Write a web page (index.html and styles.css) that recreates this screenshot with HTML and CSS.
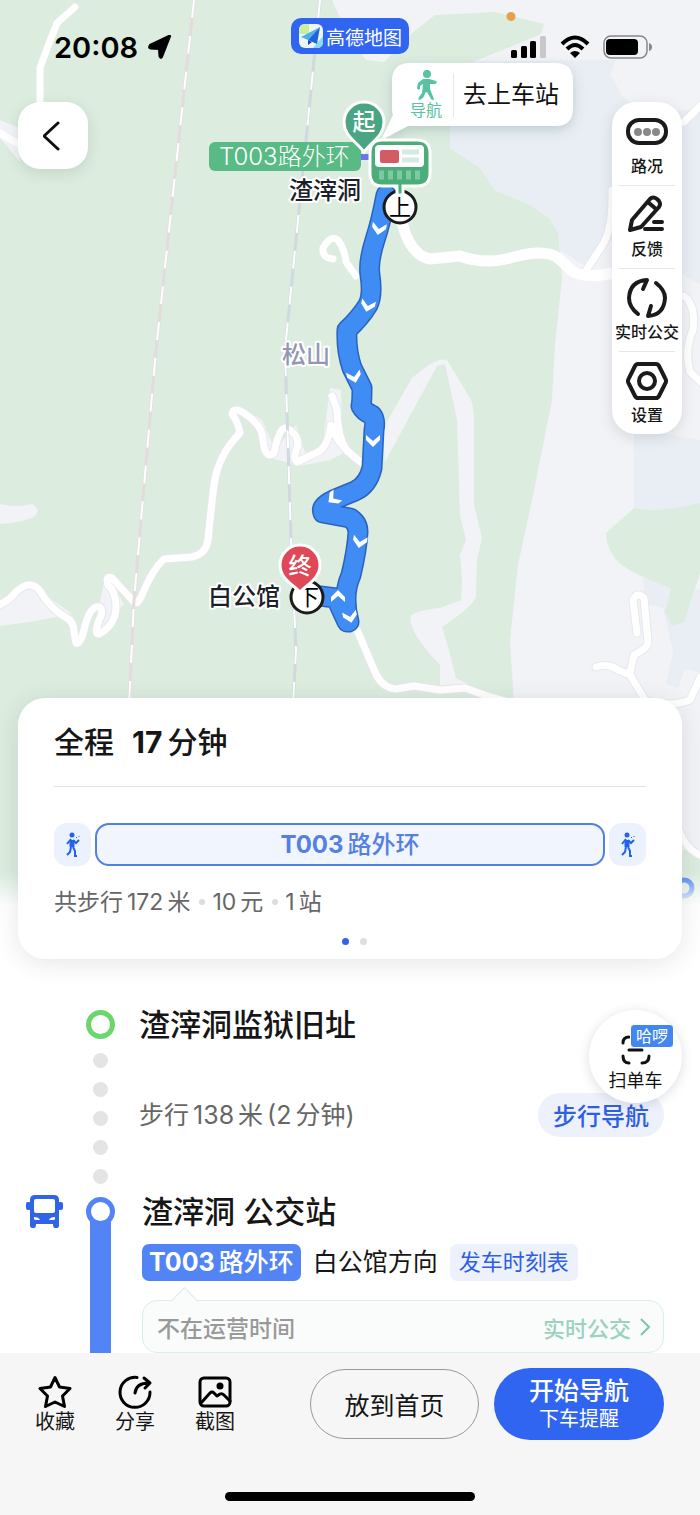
FILE: index.html
```
<!DOCTYPE html>
<html lang="zh-CN">
<head>
<meta charset="UTF-8" />
<meta name="viewport" content="width=device-width, initial-scale=1" />
<title>公交路线详情</title>
<link rel="stylesheet" href="styles.css">
</head>
<body>

<!-- mapa -->
<svg class="map" viewBox="0 0 700 905" preserveAspectRatio="xMidYMin slice">
  <defs>
    <linearGradient id="fade" x1="0" y1="0" x2="0" y2="1">
      <stop offset="0" stop-color="#fff" stop-opacity="0" />
      <stop offset="1" stop-color="#fff" />
    </linearGradient>
    <filter id="shadow" x="-20%" y="-30%" width="140%" height="180%">
      <feDropShadow dx="0" dy="4" stdDeviation="6" flood-color="#4a6070" flood-opacity=".25" />
    </filter>
    <path id="arrow" d="M-7-5 0 1 7-5V0L0 7-7 0Z" />
  </defs>

  <rect width="700" height="905" fill="#dcecdf" />
  <path class="land" d="M332 0 350 40 366 60 384 62 410 35 435 15 495 12 544 24 541 34 510 47 475 61 455 90 450 127 450 148 480 168 495 190 530 205 550 219 558 232 562 278 555 345 552 400 530 510 518 565 510 640 514 705 505 850 700 850V0Z" />
  <path class="water" d="M450 127 455 92 475 61 616 60 610 75 624 98 650 115 700 108V285L684 275 612 240 602 246 585 266 560 250 558 232 550 219 530 205 495 190 480 168 450 148ZM634 428 700 440V505L660 510 634 508ZM643 572 700 590V672L685 669 678 688 666 684 673 652 668 630 663 608 644 604Z" />
  <path fill="#dcecdf" d="M634 508Q660 513 700 503V573L684 622 672 626 665 612 671 588Q620 570 613 555 606 545 606 533Z" />
  <path class="land" d="M382 430 412 378Q437 356 447 360L470 398Q474 405 474 420V505L482 538 477 560 476 596Q474 606 442 627L449 650 456 678 480 690 440 688 440 665Q411 635 410 618 411 611 440 608L461 600 462 580 460 555 466 540 460 515 457 420 445 364 437 366 385 462ZM0 504Q18 508 32 504 42 510 34 517 20 523 0 524ZM0 120 20 128V162L0 138ZM0 603 28 582 72 614 30 622 0 626ZM106 574 124 604 96 635 99 606ZM233 402 262 420 275 450 296 425 305 452 322 450 330 388 341 390 342 432 350 450 330 460 300 466 270 458 258 420Z" />

  <g class="road casing">
    <path d="M-4 606Q8 602 15 593 30 578 40 591 50 608 65 617 74 621 74 632L76 643Q80 645 84 630 90 604 100 607 104 612 99 620 94 634 99 634 116 625 116 606 116 592 108 585 105 575 112 578L134 602Q138 605 142 595 152 570 164 559L192 557Q206 554 208 540 211 510 214 485 218 455 240 433 238 422 232 414 234 405 248 416 263 427 263 440 265 460 274 453 279 428 285 428 298 432 298 446 292 458 297 462L320 451Q328 445 331 425 337 445 362 463M332 396 337 410Q338 440 348 452" />
    <path d="M357 630 375 672Q382 688 396 689L414 686 440 690 465 688 490 697 520 705" />
    <path d="M637 633 633 600Q637 591 644 598L648 642Q648 648 634 655L630 672M596 667Q608 663 618 670L630 675 645 700Q670 708 690 700L700 678" />
    <path d="M684 122 704 102M612 190Q613 225 604 243L585 272M684 296Q696 305 693 330 684 350 690 372L704 385M680 832Q686 850 704 857" />
  </g>
  <g class="road">
    <path d="M-4 606Q8 602 15 593 30 578 40 591 50 608 65 617 74 621 74 632L76 643Q80 645 84 630 90 604 100 607 104 612 99 620 94 634 99 634 116 625 116 606 116 592 108 585 105 575 112 578L134 602Q138 605 142 595 152 570 164 559L192 557Q206 554 208 540 211 510 214 485 218 455 240 433 238 422 232 414 234 405 248 416 263 427 263 440 265 460 274 453 279 428 285 428 298 432 298 446 292 458 297 462L320 451Q328 445 331 425 337 445 362 463M332 396 337 410Q338 440 348 452" />
    <path d="M357 630 375 672Q382 688 396 689L414 686 440 690 465 688 490 697 520 705" />
    <path d="M637 633 633 600Q637 591 644 598L648 642Q648 648 634 655L630 672M596 667Q608 663 618 670L630 675 645 700Q670 708 690 700L700 678" />
    <path d="M684 122 704 102M612 190Q613 225 604 243L585 272M684 296Q696 305 693 330 684 350 690 372L704 385M680 832Q686 850 704 857" />
    <path d="M75 7 57 23Q48 45 40 68L40 105M-2 132 20 145M333 259Q322 258 323 248 331 234 338 240 345 250 346 262L356 276" />
    <path stroke-width="11" d="M402 222Q410 255 430 259L460 256Q485 265 510 258 545 248 558 258L572 271Q582 279 614 273" />
  </g>
  <circle cx="684" cy="888" r="8" fill="none" stroke="#3e7bf4" stroke-width="5" />

  <path class="rail" stroke="#e5dadc" d="M194 0 156 350 134 600 129 705" />
  <path class="rail dash" d="M194 0 156 350 134 600 129 705" />
  <path class="rail" stroke="#d0d9e0" d="M320 0 308 120 285 350 291 540 296 650 293 705" />
  <path class="rail dash" d="M320 0 308 120 285 350 291 540 296 650 293 705" />

  <g class="route-line" stroke="#2a62bd" stroke-width="21">
    <path d="M386 195Q381 222 375 240 368 262 370 275 373 295 368 305 360 318 347 330 346 350 352 368L362 388Q362 402 361 406 364 412 372 415 376 420 374 430L372 468Q368 485 355 491L338 498Q320 505 323 513L350 518Q358 523 358 532 357 550 351 575 342 595 349 622M320 596 336 598 347 622" />
  </g>
  <g class="route-line" stroke="#3f8cf5" stroke-width="18">
    <path d="M386 195Q381 222 375 240 368 262 370 275 373 295 368 305 360 318 347 330 346 350 352 368L362 388Q362 402 361 406 364 412 372 415 376 420 374 430L372 468Q368 485 355 491L338 498Q320 505 323 513L350 518Q358 523 358 532 357 550 351 575 342 595 349 622M320 596 336 598 347 622" />
  </g>
  <g fill="#fff">
    <use href="#arrow" transform="translate(379 228)rotate(10)" />
    <use href="#arrow" transform="translate(368 305)rotate(14)" />
    <use href="#arrow" transform="translate(354 376)rotate(-14)" />
    <use href="#arrow" transform="translate(373 440)" />
    <use href="#arrow" transform="translate(334 498)rotate(52)" />
    <use href="#arrow" transform="translate(360 541)rotate(10)" />
    <use href="#arrow" transform="translate(338 597)rotate(180)" />
    <use href="#arrow" transform="translate(350 616)rotate(-12)" />
  </g>

  <g class="label">
    <text class="hill" x="282" y="363">松山</text>
    <text x="289" y="199">渣滓洞</text>
    <text x="208" y="605">白公馆</text>
  </g>

  <path stroke="#6d75e8" stroke-width="6" d="M358 157h12" />
  <rect x="209" y="142" width="152" height="29" rx="6" fill="#58ba84" />
  <text class="line-name" x="219" y="165">T003路外环</text>

  <g fill="#fff" stroke="#1b1b1b" stroke-width="3">
    <circle cx="400" cy="207" r="16" />
    <circle cx="307" cy="597" r="16" />
  </g>
  <text class="stop" x="400" y="215">上</text>
  <text class="stop" x="308" y="605">下</text>

  <path class="pin" fill="#49a583" d="M344 122A20 20 0 0 1 384 122C384 136 372 141 364 152 356 141 344 136 344 122Z" />
  <text class="pin-text" x="364" y="130">起</text>
  <path class="pin" fill="#df4857" d="M280 565A20 20 0 0 1 320 565C320 578 308 584 300 592 292 584 280 578 280 565Z" />
  <text class="pin-text" x="300" y="574">终</text>

  <g filter="url(#shadow)">
    <path fill="#fff" d="M410 63H555Q573 63 573 81V108Q573 126 555 126H408L381 140 393 115Q392 112 392 108V81Q392 63 410 63Z" />
  </g>
  <a href="#walk">
    <circle cx="427" cy="74" r="4" fill="#57c3a0" />
    <path fill="#57c3a0" d="M423 79H429L436 81Q438 83 435 84L430 84V89L434 99Q433 101 431 99L427 92 425 93Q424 99 419 100 417 99 422 93L423 84 420 86V89Q418 91 417 88L418 83Z" />
    <text class="callout-small" x="410" y="116">导航</text>
    <path stroke="#e6e6e8" d="M453.500 73V117" />
    <text class="callout-text" x="463" y="103">去上车站</text>
  </a>

  <g>
    <path fill="#4bad79" stroke="#fff" stroke-width="3" d="M382 140H417Q430 140 430 153V173Q430 186 417 186H403V195H397V186H382Q370 186 370 173V153Q370 140 382 140Z" />
    <rect x="375" y="145" width="49" height="22" rx="4" fill="#fff" />
    <rect x="380" y="150" width="19" height="13" rx="2" fill="#d25c62" />
    <path stroke="#d3ebe2" stroke-width="5" d="M402 152H419M402 160H419" />
    <path stroke="#7cc9a2" stroke-width="9" stroke-dasharray="5 4" d="M379 175H421" />
  </g>
  <rect y="872" width="700" height="33" fill="url(#fade)" />
</svg>

<header class="top">
  <div class="status">
    <div class="clock">
      <span>20:08</span>
      <svg width="24" height="24" viewBox="0 0 24 24"><path d="M22 1.500 14 22q-1.500 2-2.500-.5L11 14 2.500 13.500Q0 13 2 10L21 1Q22.500 .5 22 1.500Z" stroke="#000" stroke-width="2" stroke-linejoin="round" /></svg>
    </div>
    <div class="brand">
      <svg width="24" height="24" viewBox="0 0 24 24">
        <rect width="24" height="24" rx="6" fill="#eef5f8" />
        <path d="M0 10V6Q0 0 6 0H10V10Z" fill="#cdeea0" />
        <path d="M14 24 24 12V18Q24 24 18 24Z" fill="#8fd8fa" />
        <path d="M21 3 2 13 9 16Z" fill="#4eb1ee" />
        <path d="M21 3 9 16 18 20Z" fill="#2264d8" />
        <path d="M9 16V21L13 18Z" fill="#174ba9" />
      </svg>
      <span>高德地图</span>
    </div>
    <div class="signals">
      <svg width="36" height="24" viewBox="0 0 36 24">
        <rect y="15" width="6" height="8" rx="1.500" /><rect x="10" y="11" width="6" height="12" rx="1.500" />
        <rect x="19" y="6" width="6" height="17" rx="1.500" /><rect x="29" y="1" width="6" height="22" rx="1.500" fill="#c6c8ca" />
      </svg>
      <svg width="30" height="24" viewBox="0 0 30 24">
        <path d="M2 9Q15-4 28 9M7 14Q15 6 23 14" fill="none" stroke="#000" stroke-width="4" />
        <path d="M10 18Q15 14 20 18L15 23Z" />
      </svg>
      <svg width="50" height="24" viewBox="0 0 50 24">
        <rect x="1" y="1" width="43" height="22" rx="7" fill="none" stroke="#85888a" stroke-width="1.500" />
        <rect x="3" y="4" width="32" height="16" rx="4" /><path d="M46 8Q49 9 49 12T46 16Z" fill="#85888a" />
      </svg>
    </div>
    <i class="mic-dot"></i>
  </div>

  <div class="controls">
    <button class="back" aria-label="返回">
      <svg width="20" height="32" viewBox="0 0 20 32"><path d="M15 3 1 16 15 29" fill="none" stroke="#111" stroke-width="3" stroke-linecap="round" stroke-linejoin="round" /></svg>
    </button>
    <div class="tools">
      <button>
        <svg viewBox="0 0 42 42"><rect x="2" y="9" width="38" height="23" rx="11" /><g fill="#888" stroke="none"><circle cx="12" cy="21" r="4" /><circle cx="21" cy="21" r="4" /><circle cx="30" cy="21" r="4" /></g></svg>
        <span>路况</span>
      </button>
      <button>
        <svg viewBox="0 0 42 42"><path d="M4 36 6 26 24 5Q27 2 31 5L33 7Q35 10 33 13L15 33ZM23 9 30 15M28 28H36M19 35H36" /></svg>
        <span>反馈</span>
      </button>
      <button>
        <svg viewBox="0 0 42 42"><path d="M12 37Q3 30 3 21 4 4 21 3L17 12M30 6Q39 13 39 21 38 38 22 39L25 29" /></svg>
        <span>实时公交</span>
      </button>
      <button>
        <svg viewBox="0 0 42 42"><path d="M12 4H30Q32 4 33 6L39 18Q41 21 39 24L33 36Q32 38 30 38H12Q10 38 9 36L3 24Q1 21 3 18L9 6Q10 4 12 4Z" /><circle cx="21" cy="21" r="8" /></svg>
        <span>设置</span>
      </button>
    </div>
  </div>
</header>

<main>
  <section class="plan">
    <h1>全程 <span>17</span>分钟</h1>
    <div class="segments">
      <span class="walk">
        <svg width="18" height="26" viewBox="0 0 18 26"><circle cx="8" cy="3" r="2.500" /><path class="torso" d="M8 8V15" /><path d="M7 7 3 12M9 8 12 11 15 8M7 15 6 20 3 23M9 15 11 19V24H13" /><path class="thin" d="M12 6 13 5M15 5V4" /></svg>
      </span>
      <span class="bus-line">T003<b>路外环</b></span>
      <span class="walk">
        <svg width="18" height="26" viewBox="0 0 18 26"><circle cx="8" cy="3" r="2.500" /><path class="torso" d="M8 8V15" /><path d="M7 7 3 12M9 8 12 11 15 8M7 15 6 20 3 23M9 15 11 19V24H13" /><path class="thin" d="M12 6 13 5M15 5V4" /></svg>
      </span>
    </div>
    <p class="summary"><span>共步行<b>172</b>米</span><i></i><span><b>10</b>元</span><i></i><span><b>1</b>站</span></p>
    <div class="pager"><i class="on"></i><i></i></div>
  </section>

  <section class="route">
    <div class="step" id="walk">
      <div class="track">
        <i class="ring green"></i>
        <i class="dot"></i><i class="dot"></i><i class="dot"></i><i class="dot"></i><i class="dot"></i>
      </div>
      <div class="body">
        <h2>渣滓洞监狱旧址</h2>
        <div class="walk-row">
          <span>步行<b>138</b>米<b>(2</b>分钟)</span>
          <button class="walk-nav">步行导航</button>
        </div>
      </div>
    </div>

    <div class="step ride">
      <svg class="bus-icon" width="38" height="34" viewBox="0 0 38 34">
        <path fill="#2f63e8" fill-rule="evenodd" d="M9 0H28Q33 0 33 5V31Q33 33 31 33H29Q27 33 27 29H10Q10 33 8 33H6Q4 33 4 31V5Q4 0 9 0ZM10 4Q8 4 8 6V16Q8 18 10 18H27Q29 18 29 16V6Q29 4 27 4ZM8 22V24Q8 25 10 25H14Q13 22 8 22ZM29 22V24Q29 25 27 25H23Q24 22 29 22Z" />
        <rect y="7" width="5" height="8" rx="2" fill="#2f63e8" /><rect x="32" y="7" width="5" height="8" rx="2" fill="#2f63e8" />
      </svg>
      <div class="track"><i class="ring blue"></i></div>
      <div class="body">
        <h2>渣滓洞 公交站</h2>
        <div class="line-row">
          <span class="line-tag">T003<b>路外环</b></span>
          <span>白公馆方向</span>
          <a class="timetable" href="#">发车时刻表</a>
        </div>
        <div class="live">
          <span>不在运营时间</span>
          <a href="#">实时公交
            <svg width="12" height="20" viewBox="0 0 12 20"><path d="M2 2 10 10 2 18" fill="none" stroke="#7cc3ae" stroke-width="2" /></svg>
          </a>
        </div>
      </div>
    </div>

    <button class="scan">
      <svg width="32" height="32" viewBox="0 0 32 32"><path d="M3 9Q3 3 9 3M3 22Q3 29 9 29M29 22Q29 29 22 29M9 16H22" fill="none" stroke="#111" stroke-width="3" stroke-linecap="round" /></svg>
      <span>扫单车</span>
      <em>哈啰</em>
    </button>
  </section>
</main>

<footer>
  <div class="actions">
    <button class="action">
      <svg viewBox="0 0 36 36"><path d="M18 3.500 22.500 13 33 14.500 25.500 22 27.500 32.500 18 28 8.500 32.500 10.500 22 3 14.500 13.500 13Z" /></svg>
      <span>收藏</span>
    </button>
    <button class="action">
      <svg viewBox="0 0 36 36"><path d="M20 3.500A15 15 0 1 0 33 18M18 19Q19 9 32 9M27 4 33 9 28 14" /></svg>
      <span>分享</span>
    </button>
    <button class="action">
      <svg viewBox="0 0 36 36"><rect x="3" y="4" width="30" height="28" rx="4" /><path d="M4 29 13 19Q15 17 17 19L20 22 23 20Q25 19 27 21L33 27" /><circle cx="23" cy="12" r="3.500" fill="#000" stroke="none" /></svg>
      <span>截图</span>
    </button>
    <button class="pin-home">放到首页</button>
    <button class="start"><strong>开始导航</strong><span>下车提醒</span></button>
  </div>
  <div class="home-bar"></div>
</footer>

</body>
</html>
```
FILE: styles.css
```
* {
  box-sizing: border-box;
}
body {
  margin: 0;
  position: relative;
  display: flex; flex-direction: column;
  min-height: 100vh;
  background: white;
  font-family: Inter, "Noto Sans CJK SC", sans-serif;
  color: #161616;
}
button {
  border: none;
  padding: 0;
  background: none;
  font-family: inherit;
  color: inherit;
  cursor: pointer;
}
a {
  text-decoration: none;
}
h1, h2, p {
  margin: 0;
}
svg {
  display: block;
}

/* mapa */
.map {
  position: absolute;
  top: 0; left: 0;
  width: 100%;
  height: 905px;
}
.land {
  fill: #f2f3f6;
}
.water {
  fill: #e9eef4;
}
.road {
  fill: none;
  stroke: white;
  stroke-width: 7;
  stroke-linecap: round;
  stroke-linejoin: round;
}
.road.casing {
  stroke: #e7e8ed;
  stroke-width: 9;
}
.rail {
  fill: none;
  stroke-width: 3;
}
.rail.dash {
  stroke: white;
  stroke-width: 2;
  stroke-dasharray: 18 18;
}
.route-line {
  fill: none;
  stroke-linecap: round;
  stroke-linejoin: round;
}
.label {
  font-size: 24px;
  font-weight: 500;
  fill: #1d1f2b;
  stroke: white;
  stroke-width: 4;
  paint-order: stroke;
  stroke-linejoin: round;
}
.label .hill {
  fill: #9496b4;
}
.line-name {
  font-size: 24px;
  font-weight: 300;
  fill: white;
}
.stop {
  font-size: 22px;
  text-anchor: middle;
}
.pin {
  stroke: white;
  stroke-width: 3;
}
.pin-text {
  font-size: 23px;
  font-weight: 500;
  fill: white;
  text-anchor: middle;
}
.callout-small {
  font-size: 16px;
  fill: #57c3a0;
}
.callout-text {
  font-size: 24px;
  fill: #111;
}

/* topo */
.top {
  position: relative;
  height: 698px;
}
.status {
  display: grid;
  grid-template-columns: 1fr auto 1fr;
  height: 102px;
  padding: 18px 47px 0;
  align-items: start;
}
.clock, .signals {
  display: flex;
  align-items: center;
  height: 58px;
}
.clock {
  gap: 10px;
  padding-left: 7px;
  font-size: 29px;
  font-weight: 600;
  color: black;
}
.signals {
  justify-content: flex-end;
  gap: 13px;
}
.brand {
  display: flex;
  align-items: center;
  gap: 3px;
  height: 36px;
  padding: 0 7px 0 8px;
  border-radius: 10px;
  background: #3065f2;
  color: white;
  font-size: 19px;
}
.mic-dot {
  position: absolute;
  top: 12px; left: 73%;
  width: 9px;
  height: 9px;
  border-radius: 50%;
  background: #e8a14a;
  transform: translateX(-50%);
}
.controls {
  display: flex;
  justify-content: space-between;
  align-items: flex-start;
  padding: 0 18px;
}
.back {
  display: flex;
  align-items: center;
  justify-content: center;
  width: 70px;
  height: 67px;
  border-radius: 22px;
  background: white;
  box-shadow: 0 4px 14px rgba(60, 90, 70, 0.15);
}
.tools {
  width: 70px;
  border-radius: 24px;
  background: white;
  box-shadow: 0 4px 14px rgba(60, 70, 90, 0.15);
}
.tools button {
  display: flex; flex-direction: column; align-items: center;
  position: relative;
  width: 70px;
  height: 83px;
  padding-top: 9px;
  gap: 3px;
  font-size: 16px;
  line-height: 20px;
  font-weight: 500;
  white-space: nowrap;
}
.tools button + button::before {
  content: "";
  position: absolute;
  top: 0; left: 7px; right: 7px;
  border-top: 1px solid #e6e6e8;
}
.tools svg {
  width: 42px;
  height: 42px;
  fill: none;
  stroke: #1b1b1b;
  stroke-width: 4;
  stroke-linecap: round;
  stroke-linejoin: round;
}

/* resumo */
main {
  position: relative;
}
.plan {
  margin: 0 18px;
  padding: 20px 36px 14px;
  border-radius: 27px;
  background: white;
  box-shadow: 0 4px 24px rgba(40, 50, 60, 0.12);
}
h1 {
  padding-bottom: 20px;
  border-bottom: 1px solid #e4e4e6;
  font-size: 30px;
  line-height: 48px;
  font-weight: 500;
}
h1 span {
  margin: 0 5px 0 10px;
  font-weight: bold;
}
.segments {
  display: flex;
  gap: 4px;
  margin-top: 36px;
  height: 43px;
}
.walk {
  display: flex;
  align-items: center;
  justify-content: center;
  width: 37px;
  border-radius: 13px;
  background: #ebf1fd;
}
.walk svg {
  fill: #2462ee;
}
.walk path {
  fill: none;
  stroke: #2462ee;
  stroke-width: 2;
}
.walk .torso {
  stroke-width: 5;
}
.walk .thin {
  stroke-width: 1;
}
.bus-line {
  flex: 1;
  border: 2px solid #5381df;
  border-radius: 14px;
  background: #f0f5fe;
  color: #5580df;
  font-size: 24px;
  line-height: 39px;
  font-weight: bold;
  text-align: center;
}
.bus-line b, .line-tag b {
  margin-left: 4px;
  font-weight: 500;
}
.summary {
  display: flex;
  align-items: center;
  margin-top: 20px;
  font-size: 23px;
  line-height: 32px;
  color: #666;
}
.summary b, .walk-row b {
  margin: 0 4px;
  font-weight: normal;
}
.summary i {
  width: 6px;
  height: 6px;
  margin: 0 3px 0 9px;
  border-radius: 50%;
  background: #dddde0;
}
.pager {
  display: flex;
  justify-content: center;
  gap: 11px;
  margin-top: 20px;
  padding-left: 9px;
}
.pager i {
  width: 7px;
  height: 7px;
  border-radius: 50%;
  background: #dddde2;
}
.pager .on {
  background: #2f63e8;
}

/* trajeto */
.route {
  position: relative;
  padding: 51px 36px 0 86px;
}
.step {
  display: flex;
  position: relative;
}
.track {
  display: flex; flex-direction: column; align-items: center;
  gap: 14px;
  width: 29px;
  padding-bottom: 13px;
}
.ring {
  position: relative;
  width: 29px;
  height: 29px;
  border: 5px solid;
  border-radius: 50%;
  background: white;
}
.ring.green {
  border-color: #6bd66b;
}
.ring.blue {
  border-color: #5384f5;
}
.dot {
  width: 15px;
  height: 15px;
  border-radius: 50%;
  background: #e4e4e4;
}
.body {
  flex: 1;
  padding-left: 24px;
}
h2 {
  font-size: 31px;
  line-height: 30px;
  font-weight: 500;
}
.walk-row {
  display: flex;
  align-items: center;
  justify-content: space-between;
  margin-top: 53px;
  font-size: 25px;
  line-height: 42px;
  color: #666;
}
.walk-nav {
  height: 44px;
  padding: 0 15px 2px;
  border-radius: 22px;
  background: #edf1fc;
  color: #2f5fe0;
  font-size: 24px;
  font-weight: 500;
}
.ride .track::before {
  content: "";
  position: absolute;
  top: 14px; bottom: 0;
  width: 21px;
  background: #5384f5;
}
.ride .body {
  padding-left: 27px;
}
.bus-icon {
  position: absolute;
  top: -2px; left: -60px;
}
.line-row {
  display: flex;
  align-items: center;
  gap: 12px;
  margin-top: 17px;
  font-size: 25px;
  line-height: 37px;
  white-space: nowrap;
}
.line-tag {
  padding: 0 7px;
  border-radius: 7px;
  background: #5384f5;
  color: white;
  font-weight: bold;
}
.timetable {
  padding: 0 9px;
  border-radius: 7px;
  background: #edf1fc;
  color: #2f5fe0;
  font-size: 22px;
}
.live {
  display: flex;
  align-items: center;
  justify-content: space-between;
  position: relative;
  height: 53px;
  margin-top: 19px;
  padding: 0 12px 0 14px;
  border: 1px solid #d8eeea;
  border-radius: 15px;
  background: #fafcfb;
  color: #999;
  font-size: 23px;
  font-weight: 500;
}
.live::before {
  content: "";
  position: absolute;
  top: -10px; left: 32px;
  width: 18px;
  height: 18px;
  border: solid #d8eeea;
  border-width: 1px 0 0 1px;
  background: linear-gradient(135deg, #fafcfb 50%, transparent 50%);
  transform: rotate(45deg);
}
.live a {
  display: flex;
  align-items: center;
  gap: 8px;
  color: #9bd2bf;
  font-size: 22px;
}
.scan {
  display: flex; flex-direction: column; align-items: center;
  position: absolute;
  top: 51px; right: 18px;
  width: 93px;
  height: 93px;
  padding-top: 24px;
  border-radius: 50%;
  background: white;
  box-shadow: 0 2px 12px rgba(40, 50, 60, 0.16);
  color: #111;
  font-size: 18px;
  line-height: 30px;
}
.scan em {
  position: absolute;
  top: 14px; right: 8px;
  padding: 0 5px;
  border: 1px solid white;
  border-radius: 4px;
  background: #4287ef;
  color: white;
  font-size: 16px;
  line-height: 22px;
  font-style: normal;
}

/* rodape */
footer {
  position: relative;
  flex: 1;
  padding: 15px 36px 14px 35px;
  background: #f6f6f6;
}
.actions {
  display: flex;
  align-items: center;
}
.action {
  margin-right: 40px;
  font-size: 20px;
  line-height: 24px;
}
.action svg {
  width: 36px;
  height: 36px;
  margin: 0 auto;
  fill: none;
  stroke: black;
  stroke-width: 3;
  stroke-linecap: round;
  stroke-linejoin: round;
}
.pin-home {
  width: 169px;
  height: 70px;
  margin-left: auto;
  border: 1px solid #999;
  border-radius: 35px;
  font-size: 25px;
}
.start {
  display: flex; flex-direction: column; align-items: center; justify-content: center;
  width: 170px;
  height: 72px;
  margin-left: 15px;
  border-radius: 36px;
  background: #3065f2;
  color: white;
  font-size: 20px;
  line-height: 26px;
}
.start strong {
  font-size: 25px;
  line-height: 30px;
  font-weight: 500;
}
.home-bar {
  width: 250px;
  height: 9px;
  margin: 52px auto 0;
  border-radius: 5px;
  background: black;
}
```
